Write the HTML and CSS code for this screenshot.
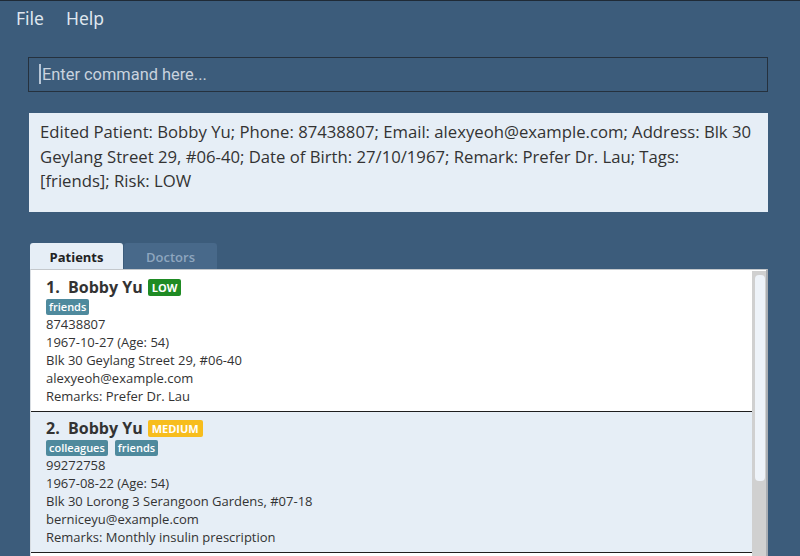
FILE: index.html
```html
<!DOCTYPE html>
<html>
<head>
<meta charset="utf-8">
<link rel="stylesheet" href="styles.css">
</head>
<body>
<div class="app">
  <div class="menubar">
    <span class="menu-item">File</span>
    <span class="menu-item">Help</span>
  </div>
  <div class="main">
    <div class="command"><span class="caret"></span><span class="placeholder">Enter command here...</span></div>
    <div class="result">Edited Patient: Bobby Yu; Phone: 87438807; Email: alexyeoh@example.com; Address: Blk 30 Geylang Street 29, #06-40; Date of Birth: 27/10/1967; Remark: Prefer Dr. Lau; Tags: [friends]; Risk: LOW</div>
    <div class="tabs">
      <div class="tab active">Patients</div>
      <div class="tab">Doctors</div>
    </div>
    <div class="listwrap">
      <div class="list">
        <div class="card">
          <div class="name-row"><span class="name">1.&nbsp;&nbsp;Bobby Yu</span><span class="risk low">LOW</span></div>
          <div class="tags"><span class="tag">friends</span></div>
          <div class="line">87438807</div>
          <div class="line">1967-10-27 (Age: 54)</div>
          <div class="line">Blk 30 Geylang Street 29, #06-40</div>
          <div class="line">alexyeoh@example.com</div>
          <div class="line">Remarks: Prefer Dr. Lau</div>
        </div>
        <div class="card alt">
          <div class="name-row"><span class="name">2.&nbsp;&nbsp;Bobby Yu</span><span class="risk medium">MEDIUM</span></div>
          <div class="tags"><span class="tag">colleagues</span><span class="tag">friends</span></div>
          <div class="line">99272758</div>
          <div class="line">1967-08-22 (Age: 54)</div>
          <div class="line">Blk 30 Lorong 3 Serangoon Gardens, #07-18</div>
          <div class="line">berniceyu@example.com</div>
          <div class="line">Remarks: Monthly insulin prescription</div>
        </div>
        <div class="card"></div>
      </div>
      <div class="scrollbar"><div class="thumb"></div></div>
    </div>
  </div>
</div>
</body>
</html>
```

FILE: styles.css
```css
* { box-sizing: border-box; }
html, body { margin: 0; padding: 0; }
body {
  width: 800px;
  height: 556px;
  overflow: hidden;
  background: #3c5c7b;
  font-family: "Open Sans", "Noto Sans", sans-serif;
}
.app {
  height: 556px;
  border-top: 1px solid #1f2a36;
  display: flex;
  flex-direction: column;
}
.menubar {
  height: 34px;
  display: flex;
  align-items: center;
  padding-left: 16px;
  gap: 22px;
}
.menu-item {
  font-family: "Noto Sans", "Open Sans", sans-serif;
  font-size: 17.5px;
  color: #dfe6ee;
}
.main {
  padding: 22px 32px 0 28px;
  display: flex;
  flex-direction: column;
  flex: 1;
  min-height: 0;
}
.command {
  height: 35px;
  border: 1px solid #25313e;
  display: flex;
  align-items: center;
  padding-left: 10px;
  padding-bottom: 1px;
}
.caret {
  width: 2px;
  height: 20px;
  background: #b8c6d6;
  margin-right: 1px;
}
.placeholder {
  font-family: Roboto, "Noto Sans", sans-serif;
  font-size: 16.4px;
  color: #c9d3de;
}
.result {
  margin-top: 21px;
  margin-left: 1px;
  background: #e6eef6;
  height: 99px;
  padding: 7px 15px 0 11px;
  font-size: 16.7px;
  line-height: 24.5px;
  color: #333;
}
.tabs {
  margin-top: 31px;
  margin-left: 2px;
  display: flex;
  gap: 1px;
}
.tab {
  width: 93px;
  height: 26px;
  border-radius: 3px 3px 0 0;
  background: #48698a;
  color: #8ea6bf;
  font-size: 13px;
  font-weight: 600;
  display: flex;
  align-items: center;
  justify-content: center;
  padding-top: 1px;
}
.tab.active {
  background: #e6eef6;
  color: #222;
  font-weight: 700;
}
.listwrap {
  margin-left: 2px;
  flex: 1;
  min-height: 0;
  display: flex;
  background: #fff;
  border-top: 1px solid #c4c8cc;
  border-left: 1px solid #d8dde2;
  border-right: 2px solid #a9adb2;
  overflow: hidden;
  padding-top: 1px;
}
.list {
  flex: 1;
  display: flex;
  flex-direction: column;
}
.card {
  background: #fff;
  border-bottom: 1px solid #1e1e1e;
  padding: 7px 0 5px 15px;
  height: 141px;
  flex-shrink: 0;
  color: #333;
}
.card.alt { background: #e6eef6; }
.name-row {
  height: 18px;
  display: flex;
  align-items: center;
  gap: 5px;
}
.name {
  font-size: 16px;
  font-weight: 700;
  color: #333;
}
.risk {
  font-size: 11px;
  font-weight: 700;
  color: #fff;
  padding: 0 4px;
  height: 17px;
  line-height: 17px;
  border-radius: 2px;
}
.risk.low { background: #1f8b24; }
.risk.medium { background: #f7bd1d; }
.tags {
  margin-top: 3px;
  height: 16px;
  display: flex;
  gap: 7px;
}
.tag {
  background: #4f8a9d;
  color: #fff;
  font-size: 11px;
  font-weight: 600;
  padding: 0 3px;
  height: 16px;
  line-height: 16px;
  border-radius: 2px;
}
.line {
  font-size: 13px;
  line-height: 18px;
  height: 18px;
  color: #333;
}
.scrollbar {
  width: 14px;
  background: #d0d0d0;
  flex-shrink: 0;
  padding: 4px 1px 0 3px;
}
.thumb {
  height: 206px;
  background: #eef3f9;
  border-radius: 4px;
}
```
